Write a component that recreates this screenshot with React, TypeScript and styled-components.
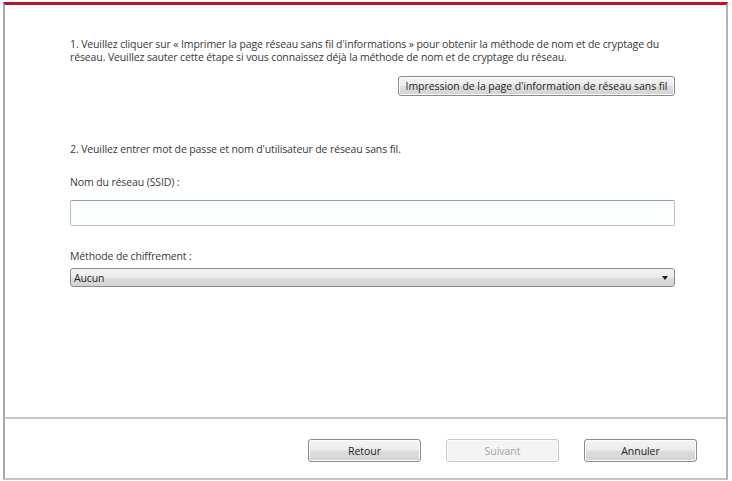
import styled, { createGlobalStyle } from "styled-components";

const GlobalStyle = createGlobalStyle`
  html, body {
    margin: 0;
    padding: 0;
    background: #ffffff;
  }
  body {
    font-family: "Open Sans", "Liberation Sans", sans-serif;
  }
`;

const Page = styled.div`
  width: 732px;
  height: 481px;
  padding: 2px 4px 1px 3px;
  box-sizing: border-box;
  background: #ffffff;
`;

const Frame = styled.div`
  height: 100%;
  box-sizing: border-box;
  border-top: 3px solid #c70f24;
  border-left: 2px solid #a9a9a9;
  border-right: 2px solid #b3b3b3;
  border-bottom: 2px solid #c4c4c4;
  display: flex;
  flex-direction: column;
`;

const Body = styled.div`
  flex: 1;
  padding: 33px 51px 0 65px;
  display: flex;
  flex-direction: column;
  color: #383838;
  font-size: 10.5px;
  letter-spacing: -0.12px;
`;

const Paragraph = styled.p`
  margin: 0;
  line-height: 13px;
`;

const RightRow = styled.div`
  display: flex;
  justify-content: flex-end;
  margin-top: 12px;
`;

const Button = styled.button<{ $wide?: boolean; $disabled?: boolean }>`
  font-family: inherit;
  font-size: 10.5px;
  letter-spacing: -0.05px;
  height: ${(p) => (p.$wide ? "20px" : "23px")};
  width: ${(p) => (p.$wide ? "277px" : "113px")};
  padding: 0;
  border-radius: 3px;
  border: 1px solid ${(p) => (p.$disabled ? "#c9c9c9" : "#8a8a8a")};
  color: ${(p) => (p.$disabled ? "#a3a3a3" : "#262626")};
  background: ${(p) =>
    p.$disabled
      ? "#f4f4f4"
      : "linear-gradient(#f4f4f4 0%, #ececec 48%, #dedede 52%, #d3d3d3 100%)"};
  box-shadow: inset 0 0 0 1px ${(p) => (p.$disabled ? "#fbfbfb" : "#fcfcfc")};
`;

const Label = styled.div<{ $top: number }>`
  margin-top: ${(p) => p.$top}px;
  line-height: 14px;
`;

const TextInput = styled.input`
  margin-top: 11px;
  height: 26px;
  box-sizing: border-box;
  border: 1px solid #b5c3cf;
  border-top-color: #8fa3b4;
  border-radius: 2px;
  background: #fcfefe;
  outline: none;
`;

const Select = styled.div`
  margin-top: 5px;
  height: 19px;
  box-sizing: border-box;
  border: 1px solid #8c8c8c;
  border-radius: 3px;
  background: linear-gradient(#f3f3f3 0%, #ebebeb 50%, #dcdcdc 51%, #d5d5d5 100%);
  display: flex;
  align-items: center;
  justify-content: space-between;
  padding: 0 6px 0 3px;
  color: #262626;
`;

const Arrow = styled.span`
  width: 0;
  height: 0;
  border-left: 3.5px solid transparent;
  border-right: 3.5px solid transparent;
  border-top: 4px solid #1a1a1a;
`;

const Footer = styled.div`
  height: 61px;
  border-top: 2px solid #c8c8c8;
  display: flex;
  justify-content: flex-end;
  align-items: flex-start;
  gap: 25px;
  padding: 20px 29px 0 0;
  box-sizing: border-box;
`;

export default function App() {
  return (
    <>
      <GlobalStyle />
      <Page>
        <Frame>
          <Body>
            <Paragraph>
              1. Veuillez cliquer sur « Imprimer la page réseau sans fil d'informations » pour obtenir la méthode de nom et de cryptage du
              <br />
              réseau. Veuillez sauter cette étape si vous connaissez déjà la méthode de nom et de cryptage du réseau.
            </Paragraph>
            <RightRow>
              <Button $wide>Impression de la page d'information de réseau sans fil</Button>
            </RightRow>
            <Label $top={46}>2. Veuillez entrer mot de passe et nom d'utilisateur de réseau sans fil.</Label>
            <Label $top={19}>Nom du réseau (SSID) :</Label>
            <TextInput />
            <Label $top={23}>Méthode de chiffrement :</Label>
            <Select>
              <span>Aucun</span>
              <Arrow />
            </Select>
          </Body>
          <Footer>
            <Button>Retour</Button>
            <Button $disabled>Suivant</Button>
            <Button>Annuler</Button>
          </Footer>
        </Frame>
      </Page>
    </>
  );
}
